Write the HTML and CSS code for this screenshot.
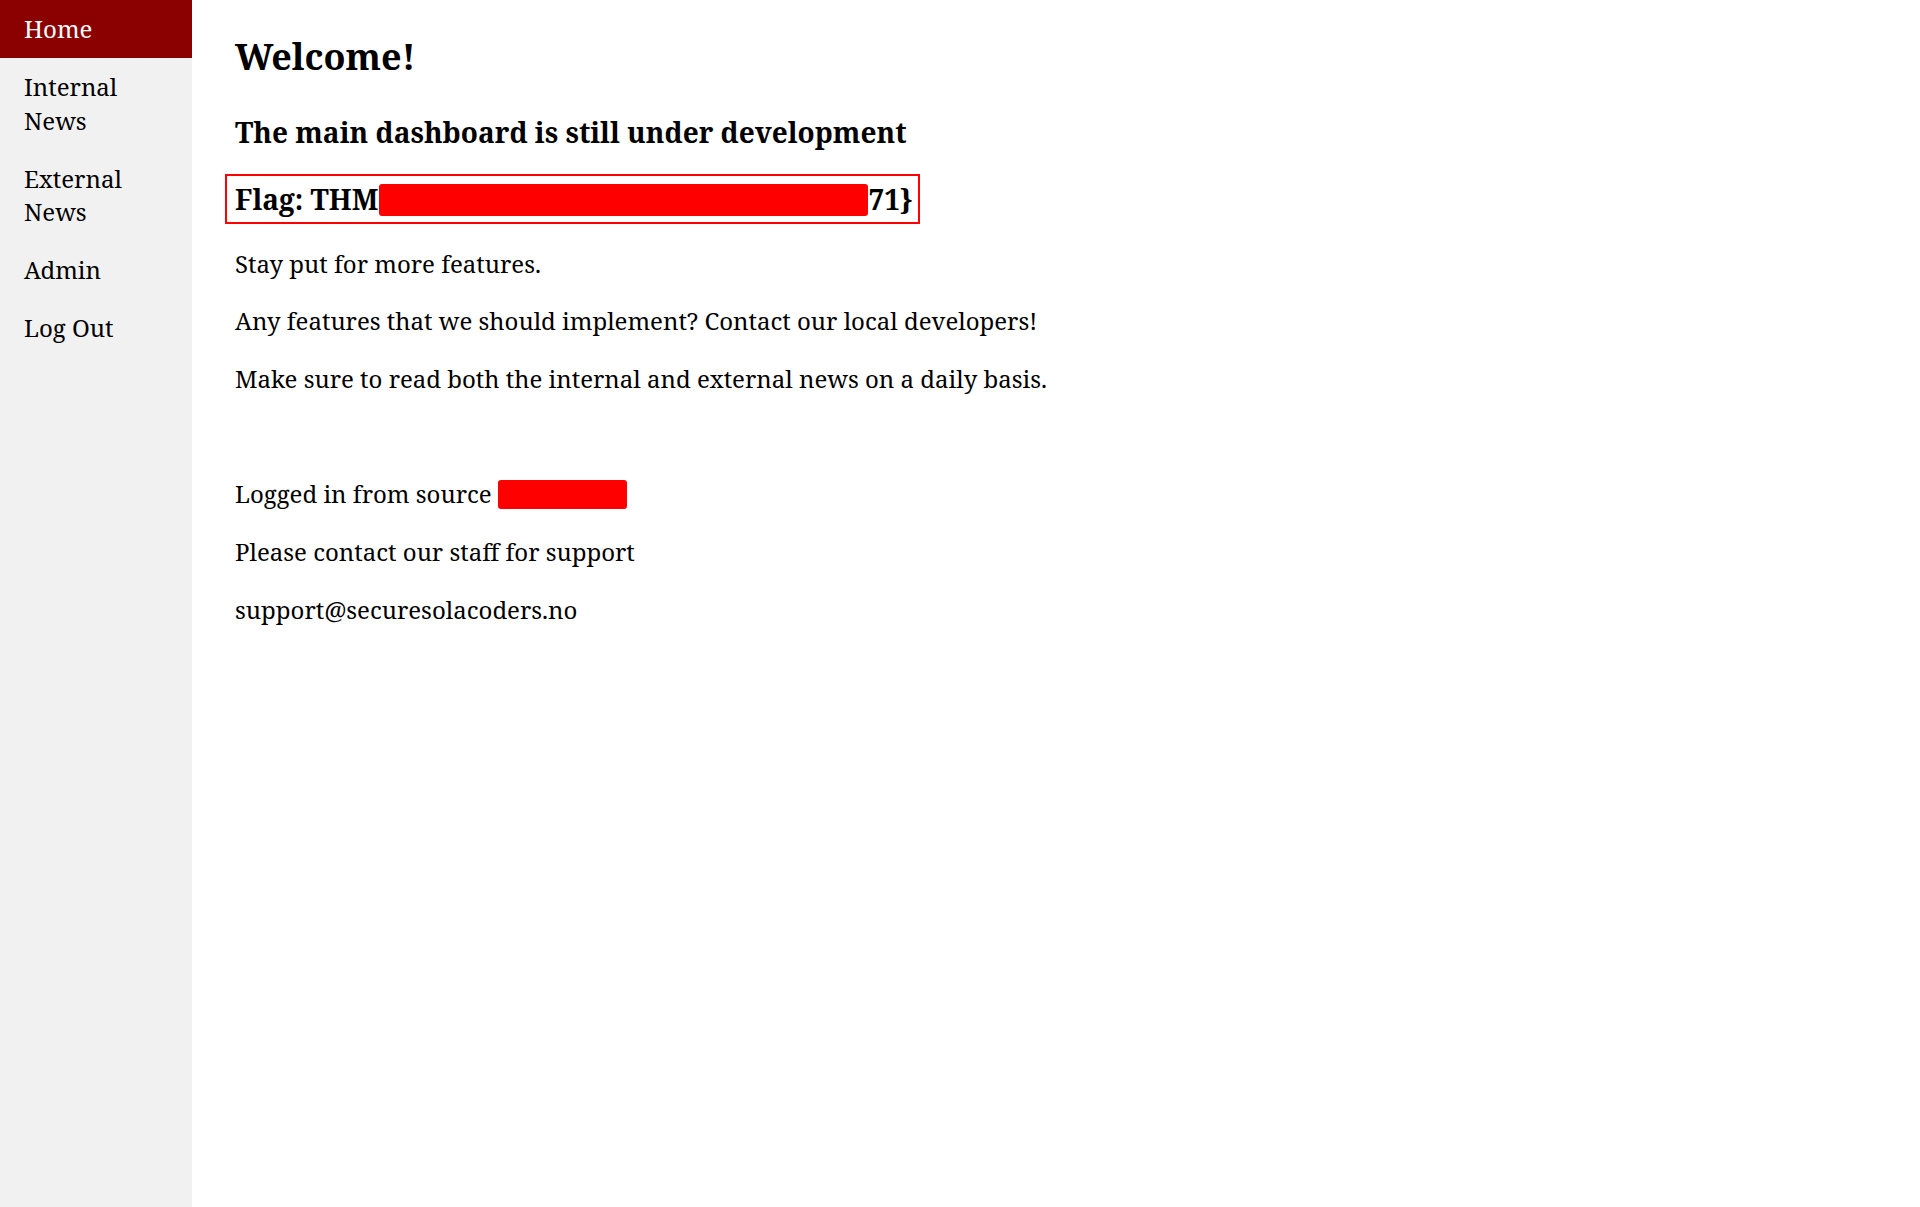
FILE: index.html
```html
<!DOCTYPE html>
<html lang="en">
<head>
<meta charset="utf-8">
<title>Dashboard</title>
<link rel="stylesheet" href="styles.css">
</head>
<body>
<div class="page">
  <nav class="sidebar">
    <a class="active" href="#">Home</a>
    <a href="#">Internal News</a>
    <a href="#">External News</a>
    <a href="#">Admin</a>
    <a href="#">Log Out</a>
  </nav>
  <main class="content">
    <h1 class="title">Welcome!</h1>
    <h2 class="subtitle">The main dashboard is still under development</h2>
    <h2 class="flag">Flag: THM<span class="redact redact-flag"></span>71}</h2>
    <p class="line">Stay put for more features.</p>
    <p class="line">Any features that we should implement? Contact our local developers!</p>
    <p class="line">Make sure to read both the internal and external news on a daily basis.</p>
    <p class="line gap">Logged in from source <span class="redact redact-ip"></span></p>
    <p class="line">Please contact our staff for support</p>
    <p class="line">support@securesolacoders.no</p>
  </main>
</div>
</body>
</html>
```
FILE: styles.css
```css
html, body {
  margin: 0;
  padding: 0;
  background: #ffffff;
}

body {
  font-family: "Noto Serif", "DejaVu Serif", serif;
  color: #000000;
}

.page {
  display: flex;
  min-height: 1207px;
}

.sidebar {
  width: 192px;
  flex: 0 0 192px;
  background: #f1f1f1;
  display: flex;
  flex-direction: column;
}

.sidebar a {
  display: block;
  font-size: 24px;
  line-height: 33.5px;
  padding: 12px 24px 12.5px 24px;
  color: #000000;
  text-decoration: none;
}

.sidebar a.active {
  background: #8b0000;
  color: #ffffff;
}

.content {
  flex: 1;
  padding-left: 43px;
}

.title {
  font-size: 36px;
  line-height: 44px;
  font-weight: bold;
  margin: 35px 0 0 0;
}

.subtitle {
  font-size: 28px;
  line-height: 38px;
  font-weight: bold;
  margin: 34px 0 0 0;
}

.flag {
  display: inline-block;
  font-size: 28px;
  line-height: 38px;
  font-weight: bold;
  margin: 23px 0 0 -10px;
  padding: 3.5px 6px 4px 8px;
  border: 2px solid #ff0000;
}

.redact {
  display: inline-block;
  background: #ff0000;
  border-radius: 3px;
}

.redact-flag {
  width: 489px;
  height: 32px;
  margin-left: 1px;
  vertical-align: -6px;
}

.redact-ip {
  width: 129px;
  height: 29px;
  vertical-align: -6px;
}

.line {
  font-size: 24px;
  line-height: 33.2px;
  margin: 0;
}

.flag + .line {
  margin-top: 23px;
}

.line + .line {
  margin-top: 24.5px;
}

.line.gap {
  margin-top: 82px;
}
```
